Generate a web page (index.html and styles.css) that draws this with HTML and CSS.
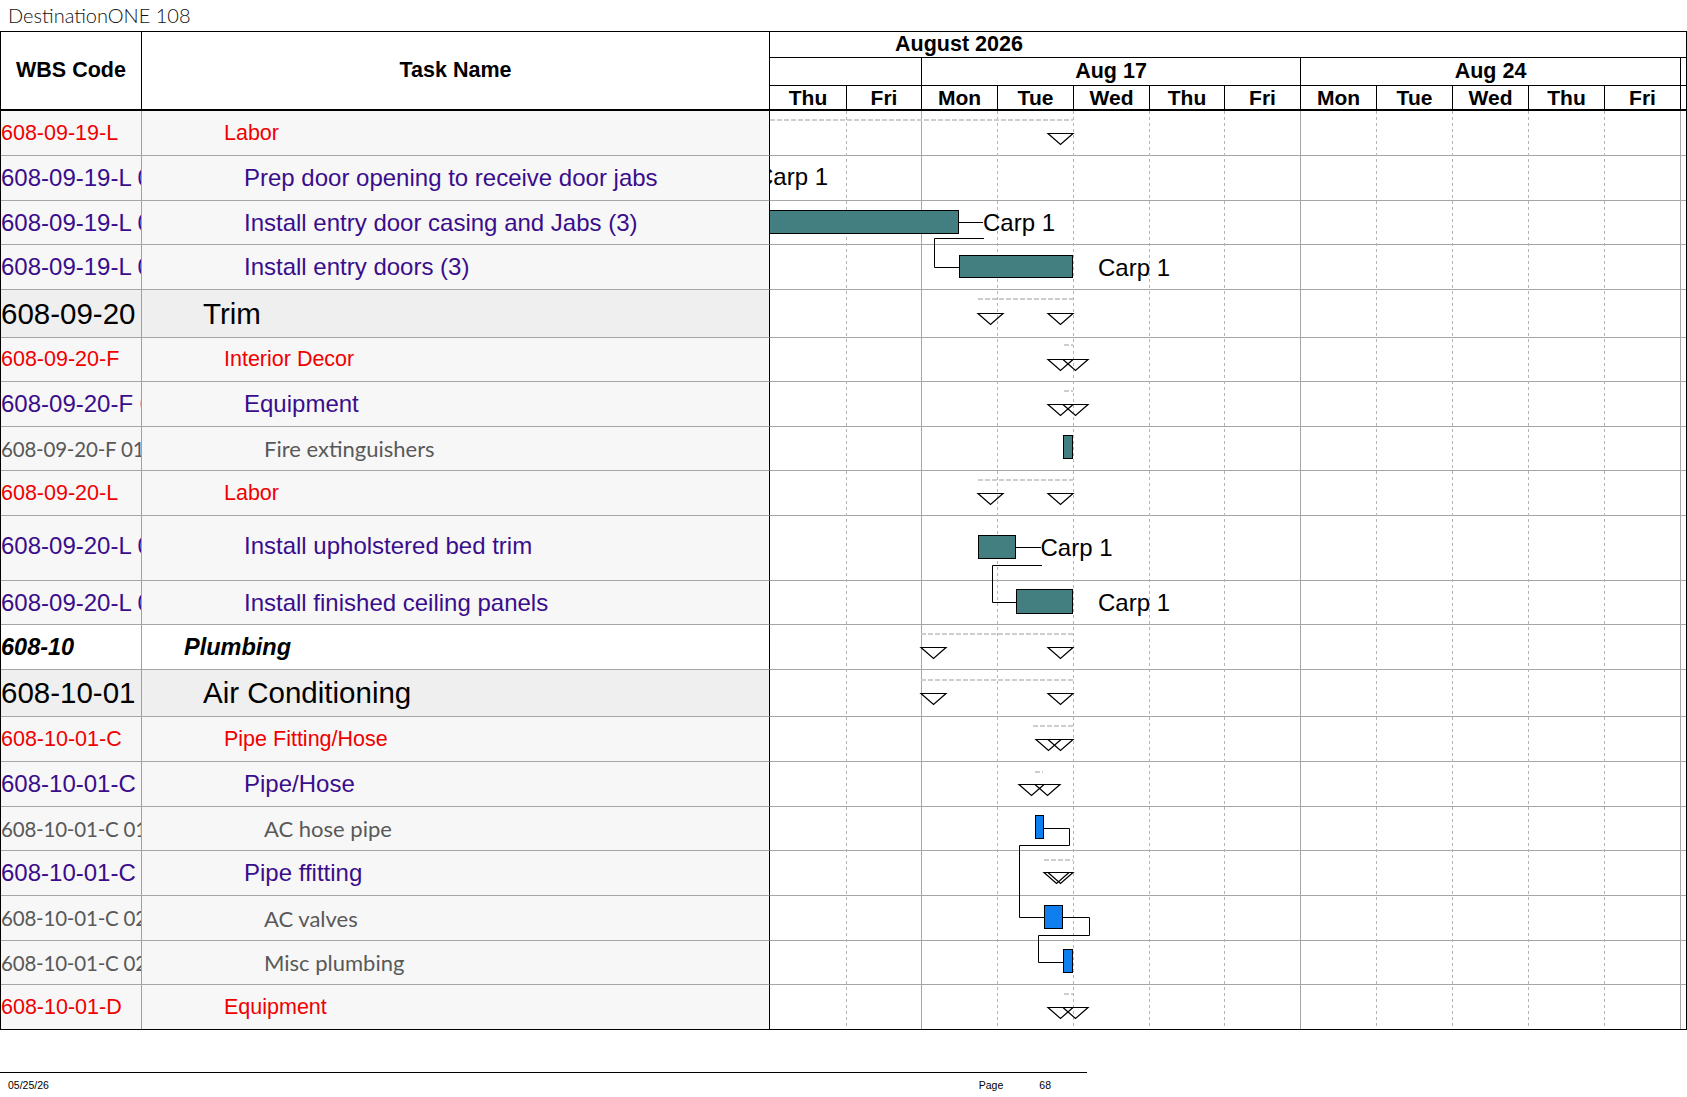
FILE: index.html
```html
<!DOCTYPE html>
<html lang="en">
<head>
<meta charset="utf-8">
<title>DestinationONE 108</title>
<link rel="stylesheet" href="styles.css">
</head>
<body>
<div class="title">DestinationONE 108</div>
<div class="sheet">
  <div class="head">
    <div class="h-cell">WBS Code</div>
    <div class="h-cell">Task Name</div>
    <div class="timescale">
      <div class="ts-month">August 2026</div>
      <div class="ts-week">
        <div></div>
        <div>Aug 17</div>
        <div>Aug 24</div>
        <div class="sliver"></div>
      </div>
      <div class="ts-day">
        <div>Thu</div><div>Fri</div><div>Mon</div><div>Tue</div><div>Wed</div><div>Thu</div>
        <div>Fri</div><div>Mon</div><div>Tue</div><div>Wed</div><div>Thu</div><div>Fri</div>
        <div class="sliver"></div>
      </div>
    </div>
  </div>
  <div class="body">
    <svg class="chart" width="916" height="918" viewBox="0 0 916 918" xmlns="http://www.w3.org/2000/svg">
      <g stroke="#a6a6a6" stroke-width="1">
        <line x1="0" y1="44.5" x2="916" y2="44.5"/>
        <line x1="0" y1="89.5" x2="916" y2="89.5"/>
        <line x1="0" y1="133.5" x2="916" y2="133.5"/>
        <line x1="0" y1="178.5" x2="916" y2="178.5"/>
        <line x1="0" y1="226.5" x2="916" y2="226.5"/>
        <line x1="0" y1="270.5" x2="916" y2="270.5"/>
        <line x1="0" y1="315.5" x2="916" y2="315.5"/>
        <line x1="0" y1="359.5" x2="916" y2="359.5"/>
        <line x1="0" y1="404.5" x2="916" y2="404.5"/>
        <line x1="0" y1="469.5" x2="916" y2="469.5"/>
        <line x1="0" y1="513.5" x2="916" y2="513.5"/>
        <line x1="0" y1="558.5" x2="916" y2="558.5"/>
        <line x1="0" y1="605.5" x2="916" y2="605.5"/>
        <line x1="0" y1="650.5" x2="916" y2="650.5"/>
        <line x1="0" y1="695.5" x2="916" y2="695.5"/>
        <line x1="0" y1="739.5" x2="916" y2="739.5"/>
        <line x1="0" y1="784.5" x2="916" y2="784.5"/>
        <line x1="0" y1="829.5" x2="916" y2="829.5"/>
        <line x1="0" y1="873.5" x2="916" y2="873.5"/>
      </g>
      <g stroke="#b4b4b4" stroke-width="1" stroke-dasharray="3 3">
        <line x1="76.5" y1="0" x2="76.5" y2="918"/>
        <line x1="227.5" y1="0" x2="227.5" y2="918"/>
        <line x1="303.5" y1="0" x2="303.5" y2="918"/>
        <line x1="379.5" y1="0" x2="379.5" y2="918"/>
        <line x1="454.5" y1="0" x2="454.5" y2="918"/>
        <line x1="606.5" y1="0" x2="606.5" y2="918"/>
        <line x1="682.5" y1="0" x2="682.5" y2="918"/>
        <line x1="758.5" y1="0" x2="758.5" y2="918"/>
        <line x1="834.5" y1="0" x2="834.5" y2="918"/>
      </g>
      <g stroke="#a6a6a6" stroke-width="1">
        <line x1="151.5" y1="0" x2="151.5" y2="918"/>
        <line x1="530.5" y1="0" x2="530.5" y2="918"/>
        <line x1="910.5" y1="0" x2="910.5" y2="918"/>
      </g>
      <g stroke="#cdcdcd" stroke-width="2" stroke-dasharray="5 2">
        <line x1="0" y1="9" x2="303" y2="9"/>
        <line x1="208" y1="188" x2="303" y2="188"/>
        <line x1="294" y1="234" x2="303" y2="234"/>
        <line x1="294" y1="280" x2="303" y2="280"/>
        <line x1="208" y1="369" x2="303" y2="369"/>
        <line x1="151" y1="523" x2="303" y2="523"/>
        <line x1="151" y1="569" x2="303" y2="569"/>
        <line x1="263" y1="615" x2="303" y2="615"/>
        <line x1="265" y1="661" x2="273" y2="661"/>
        <line x1="274" y1="749" x2="303" y2="749"/>
        <line x1="294" y1="883" x2="303" y2="883"/>
      </g>
      <g fill="none" stroke="#000" stroke-width="1.2">
        <polygon points="278,22.5 303,22.5 290.5,33.5"/>
        <polygon points="208,202.5 233,202.5 220.5,213.5"/>
        <polygon points="278,202.5 303,202.5 290.5,213.5"/>
        <polygon points="278,248.5 303,248.5 290.5,259.5"/>
        <polygon points="293,248.5 318,248.5 305.5,259.5"/>
        <polygon points="278,293.5 303,293.5 290.5,304.5"/>
        <polygon points="293,293.5 318,293.5 305.5,304.5"/>
        <polygon points="208,382.5 233,382.5 220.5,393.5"/>
        <polygon points="278,382.5 303,382.5 290.5,393.5"/>
        <polygon points="151,536.5 176,536.5 163.5,547.5"/>
        <polygon points="278,536.5 303,536.5 290.5,547.5"/>
        <polygon points="151,582.5 176,582.5 163.5,593.5"/>
        <polygon points="278,582.5 303,582.5 290.5,593.5"/>
        <polygon points="266,628.5 291,628.5 278.5,639.5"/>
        <polygon points="278,628.5 303,628.5 290.5,639.5"/>
        <polygon points="249,673.5 274,673.5 261.5,684.5"/>
        <polygon points="265,673.5 290,673.5 277.5,684.5"/>
        <polygon points="274,761.5 299,761.5 286.5,772.5"/>
        <polygon points="278,761.5 303,761.5 290.5,772.5"/>
        <polygon points="278,896.5 303,896.5 290.5,907.5"/>
        <polygon points="293,896.5 318,896.5 305.5,907.5"/>
      </g>
      <g fill="none" stroke="#000" stroke-width="1">
        <polyline points="189,111.5 213,111.5"/>
        <polyline points="214,127.5 164.5,127.5 164.5,156.5 189,156.5"/>
        <polyline points="246,436.5 271,436.5"/>
        <polyline points="272,454.5 222.5,454.5 222.5,491.5 246,491.5"/>
        <polyline points="274,717.5 299.5,717.5 299.5,734.5 249.5,734.5 249.5,806.5 274,806.5"/>
        <polyline points="293,806.5 319.5,806.5 319.5,824.5 268.5,824.5 268.5,851.5 293,851.5"/>
      </g>
      <g stroke="#000" stroke-width="1">
        <rect class="bar-teal" x="-0.5" y="99.5" width="189" height="23"/>
        <rect class="bar-teal" x="189.5" y="144.5" width="113" height="22"/>
        <rect class="bar-teal" x="293.5" y="324.5" width="9" height="23"/>
        <rect class="bar-teal" x="208.5" y="424.5" width="37" height="23"/>
        <rect class="bar-teal" x="246.5" y="478.5" width="56" height="24"/>
        <rect class="bar-blue" x="265.5" y="704.5" width="8" height="23"/>
        <rect class="bar-blue" x="274.5" y="794.5" width="18" height="23"/>
        <rect class="bar-blue" x="293.5" y="838.5" width="9" height="23"/>
      </g>
      <g class="res">
        <text x="-14" y="74">Carp 1</text>
        <text x="213" y="120">Carp 1</text>
        <text x="328" y="165">Carp 1</text>
        <text x="270.5" y="445">Carp 1</text>
        <text x="328" y="500">Carp 1</text>
      </g>
    </svg>

    <div class="wbs red">608-09-19-L</div><div class="task red lv3">Labor</div>
    <div class="wbs pur">608-09-19-L 01</div><div class="task pur lv4">Prep door opening to receive door jabs</div>
    <div class="wbs pur">608-09-19-L 02</div><div class="task pur lv4">Install entry door casing and Jabs (3)</div>
    <div class="wbs pur">608-09-19-L 03</div><div class="task pur lv4">Install entry doors (3)</div>
    <div class="wbs big">608-09-20</div><div class="task big lv2">Trim</div>
    <div class="wbs red">608-09-20-F</div><div class="task red lv3">Interior Decor</div>
    <div class="wbs pur">608-09-20-F 01</div><div class="task pur lv4">Equipment</div>
    <div class="wbs gry">608-09-20-F 01 01</div><div class="task gry lv5">Fire extinguishers</div>
    <div class="wbs red">608-09-20-L</div><div class="task red lv3">Labor</div>
    <div class="wbs pur tall">608-09-20-L 01</div><div class="task pur lv4 tall">Install upholstered bed trim</div>
    <div class="wbs pur">608-09-20-L 02</div><div class="task pur lv4">Install finished ceiling panels</div>
    <div class="wbs bi">608-10</div><div class="task bi lv1">Plumbing</div>
    <div class="wbs big">608-10-01</div><div class="task big lv2">Air Conditioning</div>
    <div class="wbs red">608-10-01-C</div><div class="task red lv3">Pipe Fitting/Hose</div>
    <div class="wbs pur">608-10-01-C 01</div><div class="task pur lv4">Pipe/Hose</div>
    <div class="wbs gry">608-10-01-C 01 01</div><div class="task gry lv5">AC hose pipe</div>
    <div class="wbs pur">608-10-01-C 02</div><div class="task pur lv4">Pipe ffitting</div>
    <div class="wbs gry">608-10-01-C 02 01</div><div class="task gry lv5">AC valves</div>
    <div class="wbs gry">608-10-01-C 02 02</div><div class="task gry lv5">Misc plumbing</div>
    <div class="wbs red end">608-10-01-D</div><div class="task red lv3 end">Equipment</div>
  </div>
</div>
<div class="footer">
  <span class="f-date">05/25/26</span>
  <span class="f-page">Page</span>
  <span class="f-num">68</span>
</div>
</body>
</html>
```
FILE: styles.css
```css
* {
  box-sizing: border-box;
}

body {
  margin: 0;
  width: 1687px;
  background: #ffffff;
  color: #000000;
  font-family: "Liberation Sans", Arial, sans-serif;
}

.title {
  height: 31px;
  line-height: 31px;
  padding-left: 8px;
  font-family: Lato, "Liberation Sans", sans-serif;
  font-weight: 300;
  font-size: 20px;
  color: #111111;
}

.sheet {
  width: 1687px;
  border: 1px solid #000000;
}

/* ---------- header ---------- */
.head {
  display: grid;
  grid-template-columns: 141px 628px 916px;
  border-bottom: 2px solid #000000;
}

.h-cell {
  height: 77px;
  display: flex;
  align-items: center;
  justify-content: center;
  font-weight: bold;
  font-size: 21.5px;
  border-right: 1px solid #000000;
}

.timescale {
  display: grid;
  grid-template-rows: 26px 28px 23px;
  font-weight: bold;
  font-size: 21.5px;
}

.ts-month {
  display: flex;
  align-items: center;
  padding-left: 125px;
  border-bottom: 1px solid #000000;
}

.ts-week {
  display: grid;
  grid-template-columns: 152px 379px 380px 5px;
  border-bottom: 1px solid #000000;
}

.ts-day {
  display: grid;
  grid-template-columns: 77px 75px 76px 76px 76px 75px 76px 76px 76px 76px 76px 76px 5px;
  font-size: 21px;
}

.ts-week > div,
.ts-day > div {
  display: flex;
  align-items: center;
  justify-content: center;
  border-right: 1px solid #000000;
  overflow: hidden;
}

.ts-week > .sliver,
.ts-day > .sliver {
  border-right: none;
}

/* ---------- body ---------- */
.body {
  display: grid;
  grid-template-columns: 141px 628px 916px;
  grid-template-rows: 45px 45px 44px 45px 48px 44px 45px 44px 45px 65px 44px 45px 47px 45px 45px 44px 45px 45px 44px 44px;
}

.chart {
  grid-column: 3;
  grid-row: 1 / span 20;
  display: block;
  background: #ffffff;
  overflow: hidden;
}

.bar-teal {
  fill: #437f80;
}

.bar-blue {
  fill: #0f7ff0;
}

.res text {
  font-family: "Liberation Sans", Arial, sans-serif;
  font-size: 24px;
  fill: #000000;
}

.wbs,
.task {
  display: flex;
  align-items: center;
  white-space: nowrap;
  overflow: hidden;
  background: #f7f7f7;
  border-bottom: 1px solid #a6a6a6;
}

.wbs {
  border-right: 1px solid #a0a0a0;
}

.task {
  border-right: 1px solid #000000;
}

.end {
  border-bottom: none;
}

.tall {
  padding-bottom: 5px;
}

.lv1 { padding-left: 42px; }
.lv2 { padding-left: 61px; }
.lv3 { padding-left: 82px; }
.lv4 { padding-left: 102px; }
.lv5 { padding-left: 122px; }

.red {
  color: #f00000;
  font-size: 21.5px;
}

.pur {
  color: #3a0d8c;
  font-size: 24px;
}

.gry {
  color: #595959;
  font-family: Lato, "Liberation Sans", sans-serif;
  font-size: 22px;
}

.wbs.gry {
  font-size: 20.5px;
  letter-spacing: -0.2px;
}

.big {
  background: #efefef;
  font-size: 29.5px;
  color: #000000;
}

.bi {
  background: #ffffff;
  font-weight: bold;
  font-style: italic;
  font-size: 23.5px;
  color: #000000;
}

/* ---------- footer ---------- */
.footer {
  width: 1087px;
  margin-top: 42px;
  border-top: 1px solid #000000;
  display: flex;
  padding: 6px 36px 0 8px;
  font-size: 10.5px;
  line-height: 12px;
}

.f-date {
  flex: 1;
}

.f-num {
  margin-left: 36px;
}
```
